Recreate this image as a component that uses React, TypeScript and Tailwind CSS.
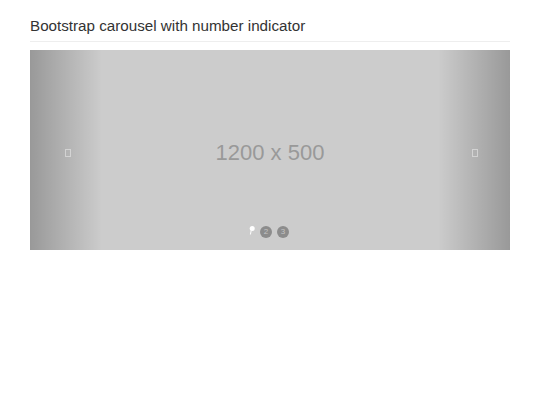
import React from "react";

function Tofu() {
  return (
    <span className="block w-[6px] h-[8px] border border-white/60 opacity-70" />
  );
}

export default function App() {
  return (
    <div
      className="w-[540px] h-[405px] bg-white px-[30px] pt-[17px]"
      style={{ fontFamily: '"Liberation Sans", Arial, sans-serif' }}
    >
      <h1 className="text-[15.2px] leading-[18px] text-[#333] pb-[6px] border-b border-[#eee] font-normal">
        Bootstrap carousel with number indicator
      </h1>
      <div className="relative mt-[8px] w-[480px] h-[200px] bg-[#cccccc] overflow-hidden">
        <div className="flex h-full items-center justify-center pt-[6px]">
          <span className="text-[22px] text-[#999] leading-none">1200 x 500</span>
        </div>
        {/* left control */}
        <div className="absolute left-0 top-0 h-full w-[72px] bg-[linear-gradient(to_right,rgba(0,0,0,0.25),rgba(0,0,0,0))] flex items-center">
          <div className="ml-[35px] mt-[5px]">
            <Tofu />
          </div>
        </div>
        {/* right control */}
        <div className="absolute right-0 top-0 h-full w-[72px] bg-[linear-gradient(to_left,rgba(0,0,0,0.25),rgba(0,0,0,0))] flex items-center justify-end">
          <div className="mr-[32px] mt-[5px]">
            <Tofu />
          </div>
        </div>
        {/* indicators */}
        <div className="absolute bottom-[12px] left-0 right-0 flex justify-center items-end">
          <div className="flex items-center gap-[5px] ml-[-2px]">
            <svg width="6" height="9" viewBox="0 0 6 9" className="mb-[3px]">
              <circle cx="3.2" cy="2.6" r="2.5" fill="#fff" />
              <path d="M2.2 4.5 L1.4 8.5" stroke="#fff" strokeWidth="1" />
            </svg>
            <span className="w-[12px] h-[12px] rounded-full bg-[#8c8c8c] text-[#c4c4c4] text-[8px] leading-[12px] text-center">
              2
            </span>
            <span className="w-[12px] h-[12px] rounded-full bg-[#8c8c8c] text-[#c4c4c4] text-[8px] leading-[12px] text-center">
              3
            </span>
          </div>
        </div>
      </div>
    </div>
  );
}
